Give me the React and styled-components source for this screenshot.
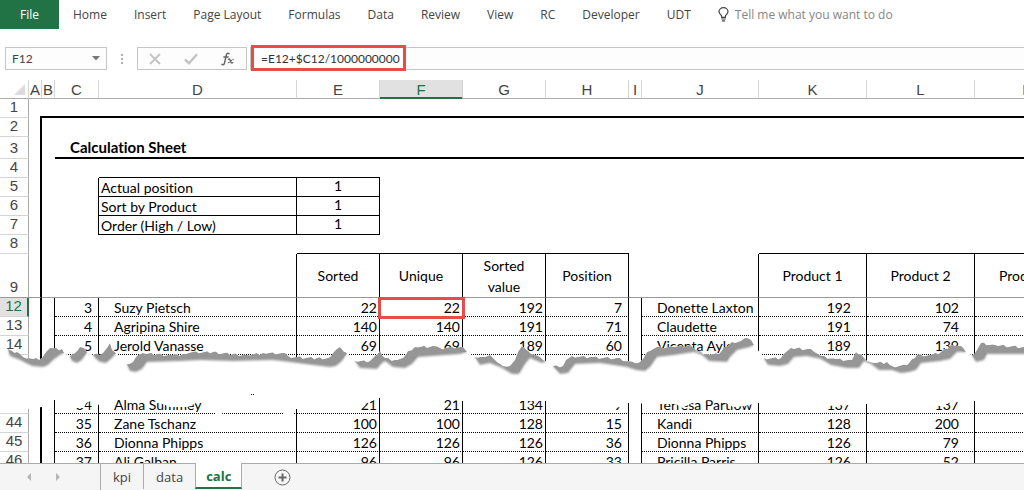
import React from "react";
import styled, { createGlobalStyle, css } from "styled-components";

const ui = `"Open Sans", "Noto Sans", sans-serif`;
const cellFont = `Lato, "Open Sans", sans-serif`;
const green = "#217346";
const line = "#ababab";
const red = "#e84c47";

const GlobalStyle = createGlobalStyle`
  * {
    box-sizing: border-box;
  }

  body {
    margin: 0;
    background: #fff;
    font-family: ${ui};
    color: #444;
  }

  button, input {
    font: inherit;
    color: inherit;
    margin: 0;
    padding: 0;
    border: none;
    outline: none;
    background: none;
  }
`;

const Wrapper = styled.div`
  display: flex;
  flex-direction: column;
  height: 100vh;
  overflow: hidden;
`;

/* ribbon */

const Ribbon = styled.nav`
  display: flex;
  align-items: stretch;
  gap: 1px;
  height: 29px;
  flex: none;
  font-size: 12px;
`;

const FileTab = styled.button`
  width: 59px;
  background: ${green};
  color: #fff;
`;

const RibbonTab = styled.button`
  padding: 0 13px;
  white-space: nowrap;
`;

const TellMe = styled.label`
  display: flex;
  align-items: center;
  gap: 6px;
  flex: 1;
  padding-left: 13px;

  input {
    flex: 1;
    min-width: 0;
  }

  input::placeholder {
    color: #868686;
    opacity: 1;
  }
`;

/* formula bar */

const FormulaBar = styled.div`
  display: flex;
  align-items: stretch;
  flex: none;
  height: 23px;
  margin: 18px 0 10px;
  padding-left: 5px;
  font-size: 12px;
`;

const Field = styled.div`
  display: flex;
  align-items: center;
  border: 1px solid #c6c6c6;
  background: #fdfdfd;
`;

const NameBox = styled(Field)`
  width: 102px;
  padding: 0 6px;

  input {
    flex: 1;
    min-width: 0;
    font-family: ${cellFont};
  }

  button {
    display: flex;
  }
`;

const Grip = styled.div`
  display: flex;
  flex-direction: column;
  align-items: center;
  justify-content: center;
  gap: 2px;
  width: 30px;

  span {
    width: 2px;
    height: 2px;
    background: #b0b0b0;
  }
`;

const Actions = styled(Field)`
  width: 110px;
  margin-right: 3px;
  justify-content: space-around;

  button {
    display: flex;
  }
`;

const Formula = styled(Field)`
  position: relative;
  flex: 1;
  border-right: none;
  padding-left: 10px;

  input {
    flex: 1;
    min-width: 0;
    font-family: ${cellFont};
    color: #333;
  }
`;

const FormulaMark = styled.div`
  position: absolute;
  top: -3px;
  left: 0;
  width: 155px;
  height: 26px;
  border: 3px solid ${red};
  pointer-events: none;
`;

/* sheet */

const Sheet = styled.main`
  position: relative;
  flex: 1;
  min-height: 0;
  overflow: hidden;
`;

const Grid = styled.table`
  width: 1083px;
  table-layout: fixed;
  border-spacing: 0;
  font-family: ${cellFont};
  font-size: 14px;
  font-variant-ligatures: none;
  line-height: 16px;
  color: #000;
`;

const ColHead = styled.th`
  height: 19px;
  padding: 0;
  border-bottom: 1px solid ${line};
  border-right: 1px solid #d4d4d4;
  font: 15px/17px "Liberation Sans", sans-serif;
  color: #444;
  overflow: hidden;

  ${({ $active }) =>
    $active &&
    css`
      background: #e1e1e1;
      color: ${green};
      border-bottom-color: ${green};
      box-shadow: inset 0 -1px ${green};
    `}
`;

const Corner = styled(ColHead)`
  text-align: right;
  vertical-align: bottom;

  svg {
    display: block;
    margin: 0 3px 3px auto;
  }
`;

const RowHead = styled.th`
  padding: 0 0 3px;
  vertical-align: bottom;
  border-bottom: 1px solid ${({ $freeze }) => ($freeze ? "#999" : "#d4d4d4")};
  border-right: 1px solid ${line};
  font: 15px/15px "Liberation Sans", sans-serif;
  color: #444;

  ${({ $active }) =>
    $active &&
    css`
      background: #e1e1e1;
      color: ${green};
      border-right: 2px solid ${green};
    `}
`;

const Row = styled.tr`
  height: ${({ $height }) => $height || 19}px;
`;

const borders = {
  thin: "1px solid #000",
  thick: "2px solid #000",
  dots: "1px dotted #000",
  freeze: "1px solid #999",
};

const Cell = styled.td`
  position: relative;
  padding: 0 ${({ $right }) => $right || 0}px 0 ${({ $left }) => $left || 0}px;
  text-align: ${({ $align }) => $align || "left"};
  vertical-align: ${({ $valign }) => $valign || "bottom"};
  white-space: nowrap;
  border-right: ${({ $r }) => borders[$r] || "none"};
  border-bottom: ${({ $b }) => borders[$b] || "none"};
`;

const FrameCorner = styled(Cell)`
  background: linear-gradient(#000, #000) right bottom / 2px 2px no-repeat;
`;

const HeadCell = styled(Cell)`
  padding: 0 8px;
  line-height: 21px;
  white-space: normal;
  text-align: center;
  vertical-align: middle;
`;

const Title = styled(Cell)`
  font-size: 15px;
  font-weight: 700;
  vertical-align: middle;
`;

const CellMark = styled.div`
  position: absolute;
  inset: -1px -3px -3px -2px;
  border: 3px solid ${red};
  z-index: 1;
`;

const Tear = styled.svg`
  position: absolute;
  top: 0;
  left: 0;
  pointer-events: none;
`;

/* footer */

const Footer = styled.footer`
  display: flex;
  flex: none;
  height: 27px;
  border-top: 1px solid ${line};
  background: #f5f5f5;
  font-size: 13px;
`;

const Arrows = styled.div`
  display: flex;
  align-items: center;
  justify-content: space-around;
  width: 101px;
  padding: 0 28px 0 14px;
  border-right: 1px solid ${line};

  button {
    display: flex;
  }
`;

const SheetTab = styled.button`
  height: 25px;
  padding: 0 12px;
  border-right: 1px solid ${line};

  ${({ $active }) =>
    $active &&
    css`
      margin: -1px 0 0 -1px;
      height: 26px;
      padding: 2px 10px 0;
      background: #fff;
      color: ${green};
      font-weight: 700;
      border-left: 1px solid ${line};
      border-bottom: 2px solid ${green};
    `}
`;

const AddSheet = styled.button`
  display: flex;
  align-items: center;
  margin-left: 32px;
`;

const tabs = ["Home", "Insert", "Page Layout", "Formulas", "Data", "Review", "View", "RC", "Developer", "UDT"];

const columns = [
  ["A", 13],
  ["B", 13],
  ["C", 44],
  ["D", 198],
  ["E", 83],
  ["F", 83],
  ["G", 83],
  ["H", 83],
  ["I", 13],
  ["J", 117],
  ["K", 108],
  ["L", 108],
  ["M", 108],
];

const settings = [
  [5, "Actual position", 1],
  [6, "Sort by Product", 1],
  [7, "Order (High / Low)", 1],
];

const topRows = [
  [12, 3, "Suzy Pietsch", 22, 22, 192, 7, "Donette Laxton", 192, 102],
  [13, 4, "Agripina Shire", 140, 140, 191, 71, "Claudette", 191, 74],
  [14, 5, "Jerold Vanasse", 69, 69, 189, 60, "Vicenta Aylor", 189, 139],
  [15, "", "", "", "", "", "", "", "", ""],
];

const bottomRows = [
  [43, 34, "Alma Summey", 21, 21, 134, 9, "Terresa Partlow", 137, 137],
  [44, 35, "Zane Tschanz", 100, 100, 128, 15, "Kandi", 128, 200],
  [45, 36, "Dionna Phipps", 126, 126, 126, 36, "Dionna Phipps", 126, 79],
  [46, 37, "Ali Galban", 96, 96, 126, 33, "Pricilla Parris", 126, 52],
];

const DataRow = ({ row }) => {
  const [n, rank, name, sorted, unique, value, position, label, p1, p2] = row;
  const active = n === 12;
  return (
    <Row>
      <RowHead $active={active}>{n}</RowHead>
      <Cell $r="thick" />
      <Cell $r="thin" />
      <Cell $r="thin" $b="dots" $align="right" $right={6}>{rank}</Cell>
      <Cell $r="thin" $b="dots" $left={15}>{name}</Cell>
      <Cell $r="thin" $b="dots" $align="right" $right={2}>{sorted}</Cell>
      <Cell $r="thin" $b="dots" $align="right" $right={2}>
        {unique}
        {active && <CellMark />}
      </Cell>
      <Cell $r="thin" $b="dots" $align="right" $right={2}>{value}</Cell>
      <Cell $r="thin" $b="dots" $align="right" $right={6}>{position}</Cell>
      <Cell $r="thin" />
      <Cell $r="thin" $b="dots" $left={15}>{label}</Cell>
      <Cell $r="thin" $b="dots" $align="right" $right={15}>{p1}</Cell>
      <Cell $r="thin" $b="dots" $align="right" $right={15}>{p2}</Cell>
      <Cell $b="dots" />
    </Row>
  );
};

// Torn paper strip, y 80 is the top of the column headers
const shreds = [
  {
    top: [[8, 349], [12, 351], [17, 352], [23, 357], [33, 359], [42, 358], [46, 352], [50, 348], [62, 349], [64, 353]],
    bottom: [[60, 355], [53, 360], [48, 365], [43, 367], [32, 366], [20, 360], [10, 356]],
  },
  {
    top: [[70, 356], [75, 353], [80, 347], [84, 348], [87, 352]],
    bottom: [[82, 360], [77, 363], [72, 361]],
  },
  {
    top: [[93, 355], [103, 353], [107, 348], [110, 343], [112, 350], [116, 353]],
    bottom: [[112, 358], [106, 363], [100, 362], [95, 358]],
  },
  {
    top: [[127, 364], [133, 362], [138, 355], [143, 353], [157, 354], [173, 355], [183, 354], [193, 352], [213, 352], [233, 354], [247, 355], [263, 353], [285, 353], [288, 356], [297, 357], [317, 358], [328, 358], [333, 353], [340, 347], [347, 353]],
    bottom: [[342, 361], [336, 366], [330, 367], [313, 365], [290, 362], [273, 360], [233, 361], [200, 360], [180, 361], [147, 362], [142, 369], [136, 372], [130, 371]],
  },
  {
    top: [[355, 361], [370, 361], [375, 356], [380, 351], [385, 358], [395, 360], [403, 358], [408, 351], [415, 347], [433, 346], [440, 348], [452, 347], [463, 347], [467, 352]],
    bottom: [[460, 354], [418, 357], [412, 364], [405, 368], [393, 367], [385, 361], [381, 364], [377, 369], [360, 368]],
  },
  {
    top: [[475, 357], [483, 357], [490, 355], [495, 360], [503, 366], [510, 366], [515, 360], [518, 352], [522, 346], [528, 351], [540, 357], [547, 361]],
    bottom: [[542, 363], [530, 358], [525, 364], [519, 374], [512, 374], [502, 368], [490, 363], [480, 365]],
  },
  {
    top: [[553, 366], [563, 366], [566, 360], [572, 356], [590, 357], [617, 358], [635, 363], [640, 362], [647, 352], [657, 347], [674, 347], [690, 345], [697, 351], [707, 354], [719, 354], [724, 347], [732, 342], [741, 341], [745, 338], [751, 340], [754, 345]],
    bottom: [[750, 347], [737, 350], [730, 357], [727, 362], [709, 361], [702, 355], [694, 352], [674, 355], [657, 357], [650, 367], [645, 371], [636, 370], [627, 367], [600, 363], [575, 364], [568, 373], [560, 374]],
  },
  {
    top: [[764, 358], [781, 358], [786, 352], [791, 348], [811, 349], [821, 356], [837, 359], [852, 360], [856, 352], [861, 354], [864, 358], [874, 363], [887, 362], [892, 366], [907, 365], [912, 359], [917, 355], [930, 355], [941, 352], [951, 345], [961, 346], [966, 352]],
    bottom: [[957, 352], [950, 359], [940, 361], [921, 363], [916, 370], [909, 372], [901, 373], [892, 370], [879, 370], [871, 364], [864, 361], [859, 368], [847, 368], [831, 365], [821, 359], [807, 356], [794, 357], [788, 364], [780, 366], [768, 365]],
  },
  {
    top: [[972, 355], [977, 350], [981, 343], [995, 345], [1024, 347], [1083, 350]],
    bottom: [[1083, 358], [1024, 354], [987, 354], [984, 360], [976, 362]],
  },
];

const lowerEdge = [
  [1083, 401], [974, 401], [958, 402], [948, 403], [943, 406], [930, 406], [866, 404], [850, 405], [825, 406], [758, 403],
  [745, 406], [733, 407], [724, 402], [712, 400], [697, 401], [688, 405], [682, 408], [676, 404], [655, 404], [628, 403],
  [622, 407], [610, 408], [600, 405], [545, 401], [462, 401], [440, 399], [379, 398], [370, 402], [362, 405], [296, 409],
  [293, 415], [284, 415], [282, 410], [223, 410], [222, 415], [216, 415], [214, 408], [205, 401], [196, 403], [188, 407],
  [170, 407], [160, 403], [154, 400], [110, 399], [98, 405], [91, 401], [86, 403], [84, 408], [74, 408], [66, 401],
  [54, 400], [42, 407], [27, 409], [26, 412], [0, 412],
];

// breaks straight runs into small teeth
const roughen = (points) =>
  points.flatMap(([x, y], i) => {
    const next = points[i + 1];
    if (!next) return [[x, y]];
    const steps = Math.max(1, Math.round((next[0] - x) / 3));
    return Array.from({ length: steps }, (_, k) => [
      x + ((next[0] - x) * k) / steps,
      y + ((next[1] - y) * k) / steps + (k ? (((x + k * 7) % 4) - 1) * 0.8 : 0),
    ]);
  });

const toPoints = (points) => points.map(([x, y]) => `${x.toFixed(1)},${y.toFixed(1)}`).join(" ");

const TornStrip = () => {
  const upper = shreds.flatMap(({ top }) => roughen(top));
  const outline = toPoints([[0, 346], ...upper, ...lowerEdge]);
  return (
    <Tear width="1083" height="383" viewBox="0 80 1083 383" aria-hidden="true">
      <defs>
        <filter id="soft" x="-5%" y="-20%" width="110%" height="150%">
          <feGaussianBlur stdDeviation="1.2" />
        </filter>
        <clipPath id="strip">
          <polygon points={outline} />
        </clipPath>
      </defs>
      <polygon fill="#fff" points={outline} />
      <g clipPath="url(#strip)">
        {shreds.map(({ top, bottom }) => (
          <g key={top[0][0]} fill="#969696">
            <polygon filter="url(#soft)" points={toPoints([...top, ...bottom])} />
            <polygon points={toPoints([...roughen(top), ...bottom.map(([x, y]) => [x, y - 2])])} />
          </g>
        ))}
      </g>
      <path d="M251 394h1v1h-1zM253 394h1v1h-1z" />
    </Tear>
  );
};

const Bulb = () => (
  <svg width="11" height="15" viewBox="0 0 11 15" fill="none" stroke="#444" strokeWidth="1.2">
    <path d="M3.6 10.4V9.2C3.6 8 1 7 1 4.8a4.5 4.2 0 0 1 9 0C10 7 7.4 8 7.4 9.2v1.2z" />
    <path d="M3.4 12h4.2M4 13.8h3" />
  </svg>
);

const Fx = () => (
  <svg width="14" height="14" viewBox="0 0 14 14" fill="none" stroke="#666" strokeLinecap="round">
    <path strokeWidth="1.5" d="M8 1.6C6.6.6 5.7 1.4 5.3 3.2L3.6 10.6C3.2 12.5 2.2 13.2 1 12.4M2.9 4.9h4.2" />
    <path strokeWidth="1.4" d="M7.4 7.3c1.2-.8 1.7 0 2.1 1.7s1 2.5 2.3 1.7" />
    <path strokeWidth="1" d="M12.3 7.2c-1.4-.2-3.3 3.8-5.2 3.7" />
  </svg>
);

const App = () => {
  return (
    <Wrapper>
      <GlobalStyle />
      <Ribbon>
        <FileTab>File</FileTab>
        {tabs.map((tab) => (
          <RibbonTab key={tab}>{tab}</RibbonTab>
        ))}
        <TellMe>
          <Bulb />
          <input type="text" placeholder="Tell me what you want to do" />
        </TellMe>
      </Ribbon>

      <FormulaBar>
        <NameBox>
          <input type="text" aria-label="Name box" defaultValue="F12" />
          <button aria-label="Show names">
            <svg width="8" height="5" viewBox="0 0 8 5">
              <path d="M0 0h8L4 4.5z" fill="#777" />
            </svg>
          </button>
        </NameBox>
        <Grip>
          <span />
          <span />
          <span />
        </Grip>
        <Actions>
          <button aria-label="Cancel">
            <svg width="12" height="12" viewBox="0 0 12 12" stroke="#c3c3c3" strokeWidth="1.8">
              <path d="M1 1l10 10M11 1L1 11" />
            </svg>
          </button>
          <button aria-label="Enter">
            <svg width="14" height="12" viewBox="0 0 14 12" fill="none" stroke="#c3c3c3" strokeWidth="2.4">
              <path d="M1 6.5l4 3.7L13 1.2" />
            </svg>
          </button>
          <button aria-label="Insert function">
            <Fx />
          </button>
        </Actions>
        <Formula>
          <input type="text" aria-label="Formula" defaultValue="=E12+$C12/1000000000" />
          <FormulaMark />
        </Formula>
      </FormulaBar>

      <Sheet>
        <Grid>
          <colgroup>
            <col width="29" />
            {columns.map(([name, width]) => (
              <col key={name} width={width} />
            ))}
          </colgroup>
          <thead>
            <tr>
              <Corner aria-label="Select all">
                <svg width="11" height="11" viewBox="0 0 11 11">
                  <path d="M11 0v11H0z" fill="#dcdcdc" />
                </svg>
              </Corner>
              {columns.map(([name]) => (
                <ColHead key={name} $active={name === "F"}>{name}</ColHead>
              ))}
            </tr>
          </thead>
          <tbody>
            <Row>
              <RowHead>1</RowHead>
              <FrameCorner />
              <Cell colSpan={12} $b="thick" />
            </Row>
            <Row>
              <RowHead>2</RowHead>
              <Cell $r="thick" />
              <Cell colSpan={12} />
            </Row>
            <Row $height={22}>
              <RowHead>3</RowHead>
              <Cell $r="thick" />
              <Cell />
              <Title colSpan={11} $b="thick" $left={15}>Calculation Sheet</Title>
            </Row>
            <Row>
              <RowHead>4</RowHead>
              <Cell $r="thick" />
              <Cell colSpan={2} />
              <Cell colSpan={2} $b="thin" />
              <Cell colSpan={8} />
            </Row>
            {settings.map(([n, label, value]) => (
              <Row key={n}>
                <RowHead>{n}</RowHead>
                <Cell $r="thick" />
                <Cell />
                <Cell $r="thin" />
                <Cell $r="thin" $b="thin" $left={2}>{label}</Cell>
                <Cell $r="thin" $b="thin" $align="center" $valign="top">{value}</Cell>
                <Cell colSpan={8} />
              </Row>
            ))}
            <Row>
              <RowHead>8</RowHead>
              <Cell $r="thick" />
              <Cell colSpan={3} />
              <Cell colSpan={4} $b="thin" />
              <Cell colSpan={2} />
              <Cell colSpan={3} $b="thin" />
            </Row>
            <Row $height={44}>
              <RowHead $freeze>9</RowHead>
              <Cell $r="thick" $b="freeze" />
              <Cell colSpan={2} $b="freeze" />
              <Cell $r="thin" $b="freeze" />
              <HeadCell $r="thin" $b="freeze">Sorted</HeadCell>
              <HeadCell $r="thin" $b="freeze">Unique</HeadCell>
              <HeadCell $r="thin" $b="freeze">Sorted value</HeadCell>
              <HeadCell $r="thin" $b="freeze">Position</HeadCell>
              <Cell $b="freeze" />
              <Cell $r="thin" $b="freeze" />
              <HeadCell $r="thin" $b="freeze">Product 1</HeadCell>
              <HeadCell $r="thin" $b="freeze">Product 2</HeadCell>
              <HeadCell $b="freeze">Product 3</HeadCell>
            </Row>
            {topRows.map((row) => (
              <DataRow key={row[0]} row={row} />
            ))}
            <Row $height={21}>
              <Cell colSpan={14} />
            </Row>
            {bottomRows.map((row) => (
              <DataRow key={row[0]} row={row} />
            ))}
          </tbody>
        </Grid>
        <TornStrip />
      </Sheet>

      <Footer>
        <Arrows>
          <button aria-label="Previous sheet">
            <svg width="4" height="8" viewBox="0 0 4 8">
              <path d="M4 0v8L0 4z" fill="#b5b5b5" />
            </svg>
          </button>
          <button aria-label="Next sheet">
            <svg width="4" height="8" viewBox="0 0 4 8">
              <path d="M0 0v8l4-4z" fill="#b5b5b5" />
            </svg>
          </button>
        </Arrows>
        <SheetTab>kpi</SheetTab>
        <SheetTab>data</SheetTab>
        <SheetTab $active>calc</SheetTab>
        <AddSheet aria-label="New sheet">
          <svg width="17" height="17" viewBox="0 0 17 17" fill="none" stroke="#666">
            <circle cx="8.5" cy="8.5" r="7.5" />
            <path strokeWidth="2" d="M8.5 4.5v8M4.5 8.5h8" />
          </svg>
        </AddSheet>
      </Footer>
    </Wrapper>
  );
};

export default App;
